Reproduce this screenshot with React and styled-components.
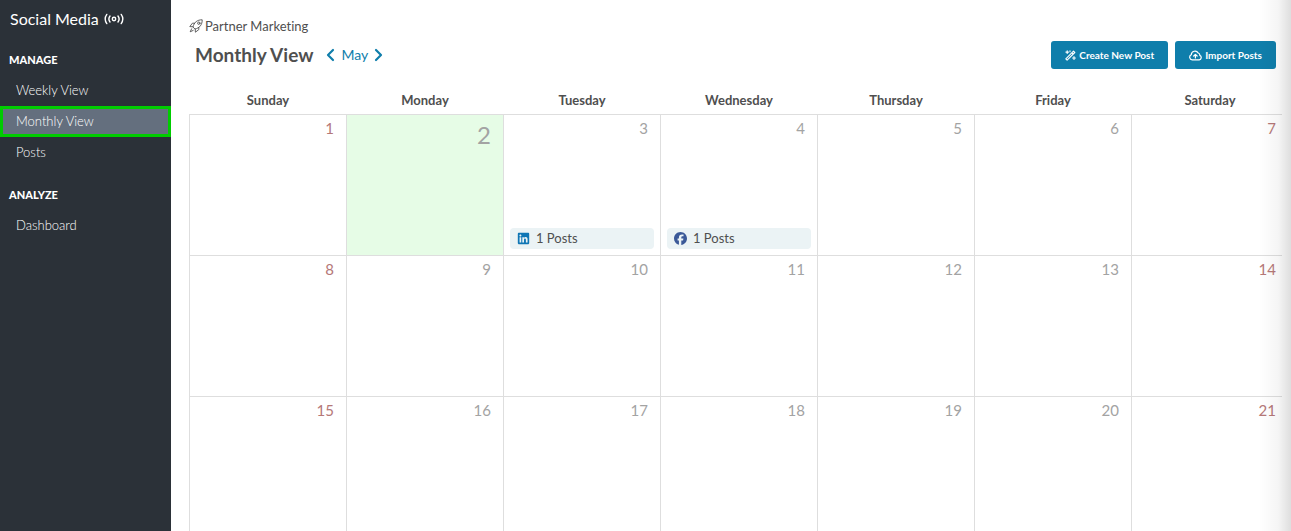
import React from "react";
import styled, { createGlobalStyle, css } from "styled-components";
import { FaLinkedin, FaFacebook } from "react-icons/fa6";

const GlobalStyle = createGlobalStyle`
  *, *::before, *::after { box-sizing: border-box; }
  body {
    margin: 0;
    background: #fff;
    color: #4f4f4f;
    font-family: Lato, "Liberation Sans", sans-serif;
    font-size: 13px;
    font-variant-ligatures: none;
    line-height: 20px;
  }
`;

const Shell = styled.div`
  display: flex;
  height: 100vh;
  overflow: hidden;
`;

const Sidebar = styled.nav`
  flex: 0 0 171px;
  padding-top: 9px;
  background: #2b3138;
  color: #fff;
`;

const Brand = styled.div`
  display: flex;
  align-items: center;
  gap: 5px;
  margin-bottom: 21px;
  padding-left: 10px;
  font-size: 16px;
`;

const Group = styled.section`
  margin-bottom: 17px;
`;

const GroupTitle = styled.h2`
  margin: 0 0 5px;
  padding-left: 9px;
  font-size: 11px;
  font-weight: 900;
  line-height: 20px;
  text-transform: uppercase;
`;

const NavList = styled.ul`
  margin: 0;
  padding: 0;
  list-style: none;
`;

const NavLink = styled.a`
  display: block;
  padding: 0 13px;
  border: 3px solid transparent;
  color: #fff;
  font-size: 13px;
  font-weight: 300;
  line-height: 25px;
  text-decoration: none;
  ${({ $active }) =>
    $active &&
    css`
      border-color: #00cc00;
      background: #646f7e;
    `}
`;

const Main = styled.main`
  position: relative;
  flex: 1;
  min-width: 0;
  padding: 16px 9px 0 18px;
  overflow: hidden;
`;

const EdgeShade = styled.div`
  position: absolute;
  inset: 0 0 0 auto;
  width: 32px;
  background: linear-gradient(to right, rgba(0, 0, 0, 0), rgba(0, 0, 0, 0.04) 60%, rgba(0, 0, 0, 0.13));
  pointer-events: none;
`;

const Partner = styled.div`
  display: flex;
  align-items: center;
  gap: 2px;
`;

const Toolbar = styled.header`
  display: flex;
  align-items: center;
  gap: 13px;
  padding: 5px 6px 0;
`;

const Title = styled.h1`
  margin: 0;
  font-size: 19px;
  font-weight: 700;
  line-height: 28px;
`;

const MonthPicker = styled.div`
  display: flex;
  align-items: center;
  gap: 6px;
  color: #0f7eab;
  font-size: 14px;
`;

const ArrowButton = styled.button`
  display: flex;
  padding: 0;
  border: 0;
  background: none;
  color: inherit;
`;

const Actions = styled.div`
  display: flex;
  gap: 7px;
  margin-left: auto;
`;

const ActionButton = styled.button`
  display: flex;
  align-items: center;
  gap: 3px;
  height: 28px;
  padding: 0 14px;
  border: 0;
  border-radius: 3px;
  background: #0f7eab;
  color: #fff;
  font-family: inherit;
  font-size: 10px;
  font-weight: 700;
`;

const CalendarViewport = styled.div`
  margin-top: 17px;
  overflow: hidden;
`;

const Calendar = styled.table`
  width: calc(100% + 7px);
  border-collapse: collapse;
  table-layout: fixed;
`;

const DayName = styled.th`
  height: 28px;
  padding: 0;
  font-size: 13px;
  font-weight: 700;
`;

const DayCell = styled.td`
  height: 141px;
  padding: 3px 6px 6px;
  border: 1px solid #dedede;
  background: ${({ $today }) => ($today ? "#e6fce6" : "transparent")};
  vertical-align: top;
`;

const CellBody = styled.div`
  display: flex;
  flex-direction: column;
  justify-content: space-between;
  height: 131px;
`;

const DayNumber = styled.span`
  align-self: flex-end;
  padding-right: 6px;
  color: ${({ $weekend }) => ($weekend ? "#b57878" : "#a3a3a3")};
  font-size: ${({ $today }) => ($today ? "24px" : "15px")};
  font-weight: 400;
  line-height: ${({ $today }) => ($today ? "34px" : "20px")};
`;

const PostChip = styled.a`
  display: flex;
  align-items: center;
  gap: 6px;
  height: 21px;
  padding: 0 7px;
  border-radius: 4px;
  background: #ebf3f5;
  color: #4f4f4f;
  text-decoration: none;
`;

const Icon = ({ width, height, box, stroke = 1.3, children }) => (
  <svg
    width={width}
    height={height}
    viewBox={box}
    fill="none"
    stroke="currentColor"
    strokeWidth={stroke}
    strokeLinecap="round"
    strokeLinejoin="round"
    aria-hidden="true"
  >
    {children}
  </svg>
);

const BroadcastIcon = () => (
  <Icon width={20} height={14} box="0 0 20 14" stroke={1.4}>
    <circle cx="10" cy="7" r="1.700" />
    <path d="M6 4a5 5 0 0 0 0 6M14 4a5 5 0 0 1 0 6M2.800 2.400a8 8 0 0 0 0 9.200M17.200 2.400a8 8 0 0 1 0 9.200" />
  </Icon>
);

const RocketIcon = () => (
  <Icon width={14} height={14} box="0 0 14 14" stroke={0.9}>
    <path d="M4 7.600C5.200 3.400 8.200.7 13.200.8c.1 5-2.600 8-6.800 9.200z" />
    <path d="M5.600 4.200H3.400L.8 7.600l3.200.2M9.800 8.400v2.200l-3.400 2.600-.2-3.200M2.600 9.800 1.200 12.800l3-1.400" />
    <circle cx="9.800" cy="4.200" r="1.200" />
  </Icon>
);

const WandIcon = () => (
  <Icon width={11} height={11} box="0 0 11 11" stroke={1.1}>
    <path d="M.8 8.900 8.500 1.200l1.300 1.300-7.700 7.700zM6.800 2.900l1.300 1.300M2.200.8v2.600M.9 2.100h2.600M9 6.600v2.800M7.600 8h2.800M5 .7v1" />
  </Icon>
);

const CloudIcon = () => (
  <Icon width={13} height={11} box="0 0 13 11" stroke={1.2}>
    <path d="M3.200 9.800a2.600 2.600 0 0 1-.9-5A3.700 3.700 0 0 1 9.200 3a2.200 2.200 0 0 1 1.600 2.400 2.300 2.300 0 0 1-.6 4.400zM6.400 8V4.500M4.700 6l1.700-1.700L8.100 6" />
  </Icon>
);

const Chevron = ({ d }) => (
  <Icon width={9} height={14} box="0 0 9 14" stroke={2.2}>
    <path d={d} />
  </Icon>
);

const NAV = [
  { title: "Manage", items: ["Weekly View", "Monthly View", "Posts"] },
  { title: "Analyze", items: ["Dashboard"] },
];
const DAYS = ["Sunday", "Monday", "Tuesday", "Wednesday", "Thursday", "Friday", "Saturday"];
const WEEKS = [0, 7, 14];
const TODAY = 2;
const POSTS = {
  3: { Logo: FaLinkedin, color: "#0f76b5" },
  4: { Logo: FaFacebook, color: "#3b5998" },
};

const Day = ({ number, weekend }) => {
  const post = POSTS[number];
  const today = number === TODAY;
  return (
    <DayCell $today={today}>
      <CellBody>
        <DayNumber $weekend={weekend} $today={today}>{number}</DayNumber>
        {post && (
          <PostChip href="#posts">
            <post.Logo size={13} color={post.color} aria-hidden="true" />
            1 Posts
          </PostChip>
        )}
      </CellBody>
    </DayCell>
  );
};

export default function App() {
  return (
    <>
      <GlobalStyle />
      <Shell>
        <Sidebar>
          <Brand>Social Media <BroadcastIcon /></Brand>
          {NAV.map(({ title, items }) => (
            <Group key={title}>
              <GroupTitle>{title}</GroupTitle>
              <NavList>
                {items.map((item) => (
                  <li key={item}>
                    <NavLink href="#view" $active={item === "Monthly View"}>{item}</NavLink>
                  </li>
                ))}
              </NavList>
            </Group>
          ))}
        </Sidebar>
        <Main>
          <Partner><RocketIcon /> Partner Marketing</Partner>
          <Toolbar>
            <Title>Monthly View</Title>
            <MonthPicker>
              <ArrowButton aria-label="Previous month"><Chevron d="M7 2 2 7l5 5" /></ArrowButton>
              May
              <ArrowButton aria-label="Next month"><Chevron d="m2 2 5 5-5 5" /></ArrowButton>
            </MonthPicker>
            <Actions>
              <ActionButton><WandIcon /> Create New Post</ActionButton>
              <ActionButton><CloudIcon /> Import Posts</ActionButton>
            </Actions>
          </Toolbar>
          <CalendarViewport>
            <Calendar>
              <thead>
                <tr>{DAYS.map((day) => <DayName key={day} scope="col">{day}</DayName>)}</tr>
              </thead>
              <tbody>
                {WEEKS.map((start) => (
                  <tr key={start}>
                    {DAYS.map((day, i) => (
                      <Day key={day} number={start + i + 1} weekend={i === 0 || i === 6} />
                    ))}
                  </tr>
                ))}
              </tbody>
            </Calendar>
          </CalendarViewport>
          <EdgeShade />
        </Main>
      </Shell>
    </>
  );
}
